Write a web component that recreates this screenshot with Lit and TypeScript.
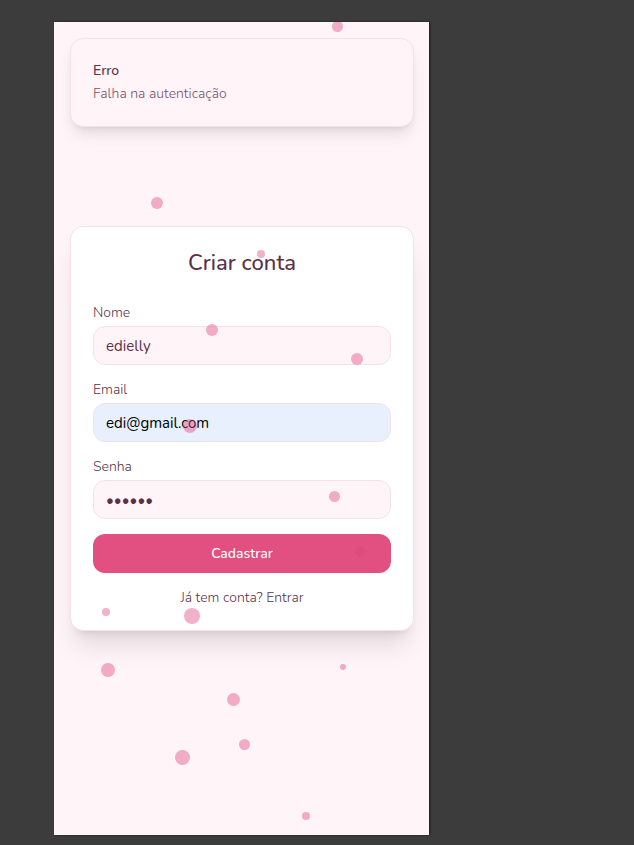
import { LitElement, html, css } from "lit";
import { customElement, state } from "lit/decorators.js";

interface Petal {
  x: number;
  y: number;
  size: number;
}

const PETALS: Petal[] = [
  { x: 278, y: -1, size: 11 },
  { x: 97, y: 175, size: 12 },
  { x: 203, y: 228, size: 8 },
  { x: 152, y: 302, size: 12 },
  { x: 297, y: 331, size: 12 },
  { x: 129, y: 397, size: 14 },
  { x: 275, y: 469, size: 11 },
  { x: 301, y: 525, size: 10 },
  { x: 48, y: 586, size: 8 },
  { x: 130, y: 586, size: 16 },
  { x: 47, y: 641, size: 14 },
  { x: 286, y: 642, size: 6 },
  { x: 173, y: 671, size: 13 },
  { x: 185, y: 717, size: 11 },
  { x: 121, y: 728, size: 15 },
  { x: 248, y: 790, size: 8 },
];

@customElement("app-root")
export class AppRoot extends LitElement {
  @state() private petals = PETALS;

  static styles = css`
    :host {
      display: flow-root;
      box-sizing: border-box;
      min-height: 100vh;
      padding: 22px 54px 10px;
      background: #3c3c3c;
      font-family: Nunito, Lato, "Noto Sans", sans-serif;
      font-size: 14px;
      font-weight: 300;
      line-height: 20px;
      color: #5b3048;
    }
    *,
    *::before,
    *::after {
      box-sizing: border-box;
    }
    .screen {
      position: relative;
      display: flex;
      flex-direction: column;
      max-width: 375px;
      min-height: calc(100vh - 32px);
      padding: 16px 15px 16px 16px;
      overflow: hidden;
      background: #fff4f8;
    }
    .frame {
      max-width: 375px;
      box-shadow: 1px 0 2px rgba(0, 0, 0, 0.6);
    }
    .toast {
      padding: 22px;
      border: 1px solid #f3e3e9;
      border-radius: 13px;
      background: #fff4f8;
      box-shadow: 0 10px 15px -3px rgba(0, 0, 0, 0.1), 0 4px 6px -4px rgba(0, 0, 0, 0.1);
    }
    .toast-title {
      margin: 0 0 3px;
      font-size: 14px;
      font-weight: 500;
    }
    .toast-text {
      margin: 0;
      color: #7a5069;
    }
    .main {
      flex: 1;
      margin-top: 99px;
    }
    .card {
      padding: 20px 22px 22px;
      border: 1px solid #f3e3e9;
      border-radius: 13px;
      background: #fff;
      box-shadow: 0 20px 25px -5px rgba(0, 0, 0, 0.1), 0 8px 10px -6px rgba(0, 0, 0, 0.1);
    }
    .title {
      margin: 0 0 24px;
      font-size: 22px;
      line-height: 32px;
      font-weight: 500;
      text-align: center;
    }
    .form {
      display: grid;
      gap: 15px;
    }
    .field {
      display: grid;
      gap: 3px;
    }
    .input {
      width: 100%;
      height: 39px;
      padding: 0 12px;
      border: 1px solid #f3e3e9;
      border-radius: 12px;
      outline: none;
      background: #fff4f8;
      font: inherit;
      font-size: 15px;
      font-weight: 400;
      color: #5b3048;
    }
    .input.filled {
      background: #e8f0fe;
      color: #000;
    }
    .submit {
      height: 39px;
      padding: 0;
      border: 0;
      border-radius: 12px;
      background: #e15080;
      color: #fff;
      font: inherit;
      font-weight: 500;
    }
    .switch {
      color: #5b3048;
      text-align: center;
      text-decoration: none;
    }
    .petals {
      position: absolute;
      inset: 0;
      pointer-events: none;
    }
    .petal {
      position: absolute;
      border-radius: 50%;
      background: rgba(222, 68, 123, 0.42);
    }
  `;

  render() {
    return html`
      <div class="frame">
        <div class="screen">
          <section class="toast" role="alert">
            <h2 class="toast-title">Erro</h2>
            <p class="toast-text">Falha na autenticação</p>
          </section>
          <main class="main">
            <section class="card">
              <h1 class="title">Criar conta</h1>
              <form class="form" @submit=${(e: Event) => e.preventDefault()}>
                <div class="field">
                  <label for="name">Nome</label>
                  <input class="input" id="name" type="text" value="edielly" />
                </div>
                <div class="field">
                  <label for="email">Email</label>
                  <input class="input filled" id="email" type="email" value="edi@gmail.com" />
                </div>
                <div class="field">
                  <label for="password">Senha</label>
                  <input class="input" id="password" type="password" value="123456" />
                </div>
                <button class="submit" type="submit">Cadastrar</button>
                <a class="switch" href="#entrar">Já tem conta? Entrar</a>
              </form>
            </section>
          </main>
          <div class="petals" aria-hidden="true">
            ${this.petals.map(
              (p) => html`<span
                class="petal"
                style="left:${p.x}px;top:${p.y}px;width:${p.size}px;height:${p.size}px"
              ></span>`
            )}
          </div>
        </div>
      </div>
    `;
  }
}
